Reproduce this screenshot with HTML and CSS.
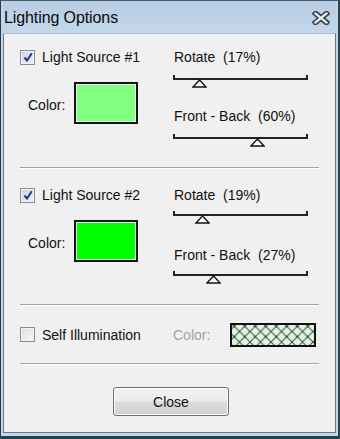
FILE: index.html
```html
<!DOCTYPE html>
<html>
<head>
<meta charset="utf-8">
<link rel="stylesheet" href="styles.css">
</head>
<body>
<div class="window">
  <div class="titlebar">
    <span class="title">Lighting Options</span>
    <svg class="close-x" width="18" height="14" viewBox="0 0 18 14">
      <path d="M3.5 2.5 L14.5 11.5 M14.5 2.5 L3.5 11.5" stroke="#3c4852" stroke-width="5.5" stroke-linecap="square" fill="none"/>
      <path d="M3.5 2.5 L14.5 11.5 M14.5 2.5 L3.5 11.5" stroke="#eef2f6" stroke-width="2.2" stroke-linecap="square" fill="none"/>
    </svg>
  </div>
  <div class="content">
    <div class="section s1">
      <div class="left">
        <label class="check-row">
          <span class="checkbox checked">
            <svg width="10" height="10" viewBox="0 0 10 10"><path d="M1.5 5.5 L4 8.5 L8.8 1.2" stroke="#24358a" stroke-width="2" fill="none"/></svg>
          </span>
          <span>Light Source #1</span>
        </label>
        <div class="color-row">
          <span class="color-label">Color:</span>
          <span class="swatch light-green"></span>
        </div>
      </div>
      <div class="right">
        <div class="slabel">Rotate&nbsp; (17%)</div>
        <div class="slider">
          <div class="track"></div>
          <svg class="thumb" style="left: 18%" width="15" height="9" viewBox="0 0 15 9"><path d="M7.5 1 L14 8 L1 8 Z" fill="#fff" stroke="#111" stroke-width="1.3"/></svg>
        </div>
        <div class="slabel second">Front - Back&nbsp; (60%)</div>
        <div class="slider">
          <div class="track"></div>
          <svg class="thumb" style="left: 61%" width="15" height="9" viewBox="0 0 15 9"><path d="M7.5 1 L14 8 L1 8 Z" fill="#fff" stroke="#111" stroke-width="1.3"/></svg>
        </div>
      </div>
    </div>
    <div class="sep"></div>
    <div class="section s2">
      <div class="left">
        <label class="check-row">
          <span class="checkbox checked">
            <svg width="10" height="10" viewBox="0 0 10 10"><path d="M1.5 5.5 L4 8.5 L8.8 1.2" stroke="#24358a" stroke-width="2" fill="none"/></svg>
          </span>
          <span>Light Source #2</span>
        </label>
        <div class="color-row">
          <span class="color-label">Color:</span>
          <span class="swatch green"></span>
        </div>
      </div>
      <div class="right">
        <div class="slabel">Rotate&nbsp; (19%)</div>
        <div class="slider">
          <div class="track"></div>
          <svg class="thumb" style="left: 20%" width="15" height="9" viewBox="0 0 15 9"><path d="M7.5 1 L14 8 L1 8 Z" fill="#fff" stroke="#111" stroke-width="1.3"/></svg>
        </div>
        <div class="slabel second">Front - Back&nbsp; (27%)</div>
        <div class="slider">
          <div class="track"></div>
          <svg class="thumb" style="left: 28%" width="15" height="9" viewBox="0 0 15 9"><path d="M7.5 1 L14 8 L1 8 Z" fill="#fff" stroke="#111" stroke-width="1.3"/></svg>
        </div>
      </div>
    </div>
    <div class="sep"></div>
    <div class="section s3">
      <div class="left">
        <label class="check-row">
          <span class="checkbox"></span>
          <span>Self Illumination</span>
        </label>
      </div>
      <div class="right wide row">
        <span class="disabled">Color:</span>
        <svg class="hatch" width="86" height="24">
          <defs>
            <pattern id="xh" width="10.5" height="10.5" patternUnits="userSpaceOnUse" x="-1" y="-2">
              <rect width="10.5" height="10.5" fill="#e4f2e6"/>
              <path d="M0 0 L10.5 10.5 M10.5 0 L0 10.5" stroke="#2c5a34" stroke-width="1"/>
              <circle cx="5.25" cy="5.25" r="1" fill="#1f3f24"/>
            </pattern>
          </defs>
          <rect x="0" y="0" width="86" height="24" fill="url(#xh)"/>
          <rect x="1" y="1" width="84" height="22" fill="none" stroke="#111" stroke-width="2"/>
        </svg>
      </div>
    </div>
    <div class="sep"></div>
    <div class="button-row">
      <button class="btn">Close</button>
    </div>
  </div>
</div>
</body>
</html>
```
FILE: styles.css
```css
html, body {
  margin: 0;
  padding: 0;
}
body {
  width: 340px;
  height: 439px;
  overflow: hidden;
  font-family: "Liberation Sans", Arial, sans-serif;
  font-size: 14px;
  color: #111;
}
.window {
  width: 340px;
  height: 439px;
  box-sizing: border-box;
  display: flex;
  flex-direction: column;
  background: #c3d6ea;
  border-left: 1px solid #2a3a42;
  border-top: 1px solid #4a5f6e;
  border-right: 2px solid #2c4650;
  border-bottom: 3px solid #1e4650;
  padding: 0 2px 3px 2px;
}
.titlebar {
  height: 32px;
  flex: none;
  display: flex;
  align-items: center;
  justify-content: space-between;
  padding: 0 6px 0 1px;
  background: linear-gradient(#b7cde4, #c4d7eb);
}
.title {
  font-size: 16px;
  color: #0a0a0a;
  letter-spacing: -0.1px;
  margin-top: 2px;
}
.close-x {
  display: block;
  margin-top: 2px;
}
.content {
  flex: 1;
  background: #f0f0f0;
  border: 1px solid #63798a;
  border-top-color: #aabdd0;
  padding: 15px 16px 0 16px;
  display: flex;
  flex-direction: column;
}
.section {
  display: flex;
}
.s1 {
  height: 118px;
}
.s2 {
  padding-top: 18px;
  height: 117px;
}
.s3 {
  height: 57px;
  align-items: center;
}
.left {
  width: 153px;
  flex: none;
}
.right {
  width: 136px;
}
.right.wide {
  width: 145px;
}
.row {
  display: flex;
  align-items: center;
}
.check-row {
  display: flex;
  align-items: center;
  gap: 7px;
  height: 16px;
  line-height: 16px;
}
.checkbox {
  width: 13px;
  height: 13px;
  border: 1px solid #8c8c8c;
  background: linear-gradient(135deg, #d9dde2, #f6f7f8);
  box-shadow: inset 0 0 0 1px #f4f4f4;
  display: flex;
  align-items: center;
  justify-content: center;
  flex: none;
}
.checkbox.checked {
  background: linear-gradient(135deg, #c9d3e4, #eef1f6);
}
.color-row {
  display: flex;
  align-items: center;
  margin-top: 17px;
  padding-left: 8px;
}
.color-label {
  width: 46px;
  margin-top: 4px;
}
.swatch {
  width: 60px;
  height: 38px;
  border: 2px solid #141414;
  box-shadow: inset 0 0 0 1px #e8f8e8;
}
.light-green {
  background: #80ff80;
}
.green {
  background: #00ff00;
}
.slabel {
  height: 16px;
  line-height: 16px;
  padding-left: 1px;
}
.slabel.second {
  margin-top: 19px;
}
.slider {
  position: relative;
  width: 135px;
  height: 14px;
  margin-top: 10px;
}
.s2 .slider {
  margin-top: 8px;
}
.s2 .slabel.second {
  margin-top: 22px;
}
.track {
  height: 3px;
  border: 2px solid #222;
  border-top: 0;
}
.thumb {
  position: absolute;
  top: 4px;
  margin-left: -5px;
  display: block;
}
.disabled {
  color: #a3a3a3;
  width: 57px;
  flex: none;
}
.hatch {
  display: block;
  flex: none;
}
.sep {
  height: 1px;
  border-top: 1px solid #a3a3a3;
  background: #ffffff;
  flex: none;
}
.button-row {
  display: flex;
  justify-content: center;
  padding-top: 22px;
  padding-left: 3px;
}
.btn {
  width: 116px;
  height: 29px;
  border: 1px solid #707070;
  border-radius: 3px;
  background: linear-gradient(#f3f3f3 0%, #ebebeb 48%, #dddddd 52%, #cfcfcf 100%);
  box-shadow: inset 0 0 0 1px #fbfbfb;
  font-family: "Liberation Sans", Arial, sans-serif;
  font-size: 14px;
  color: #111;
  padding: 0;
}
```
